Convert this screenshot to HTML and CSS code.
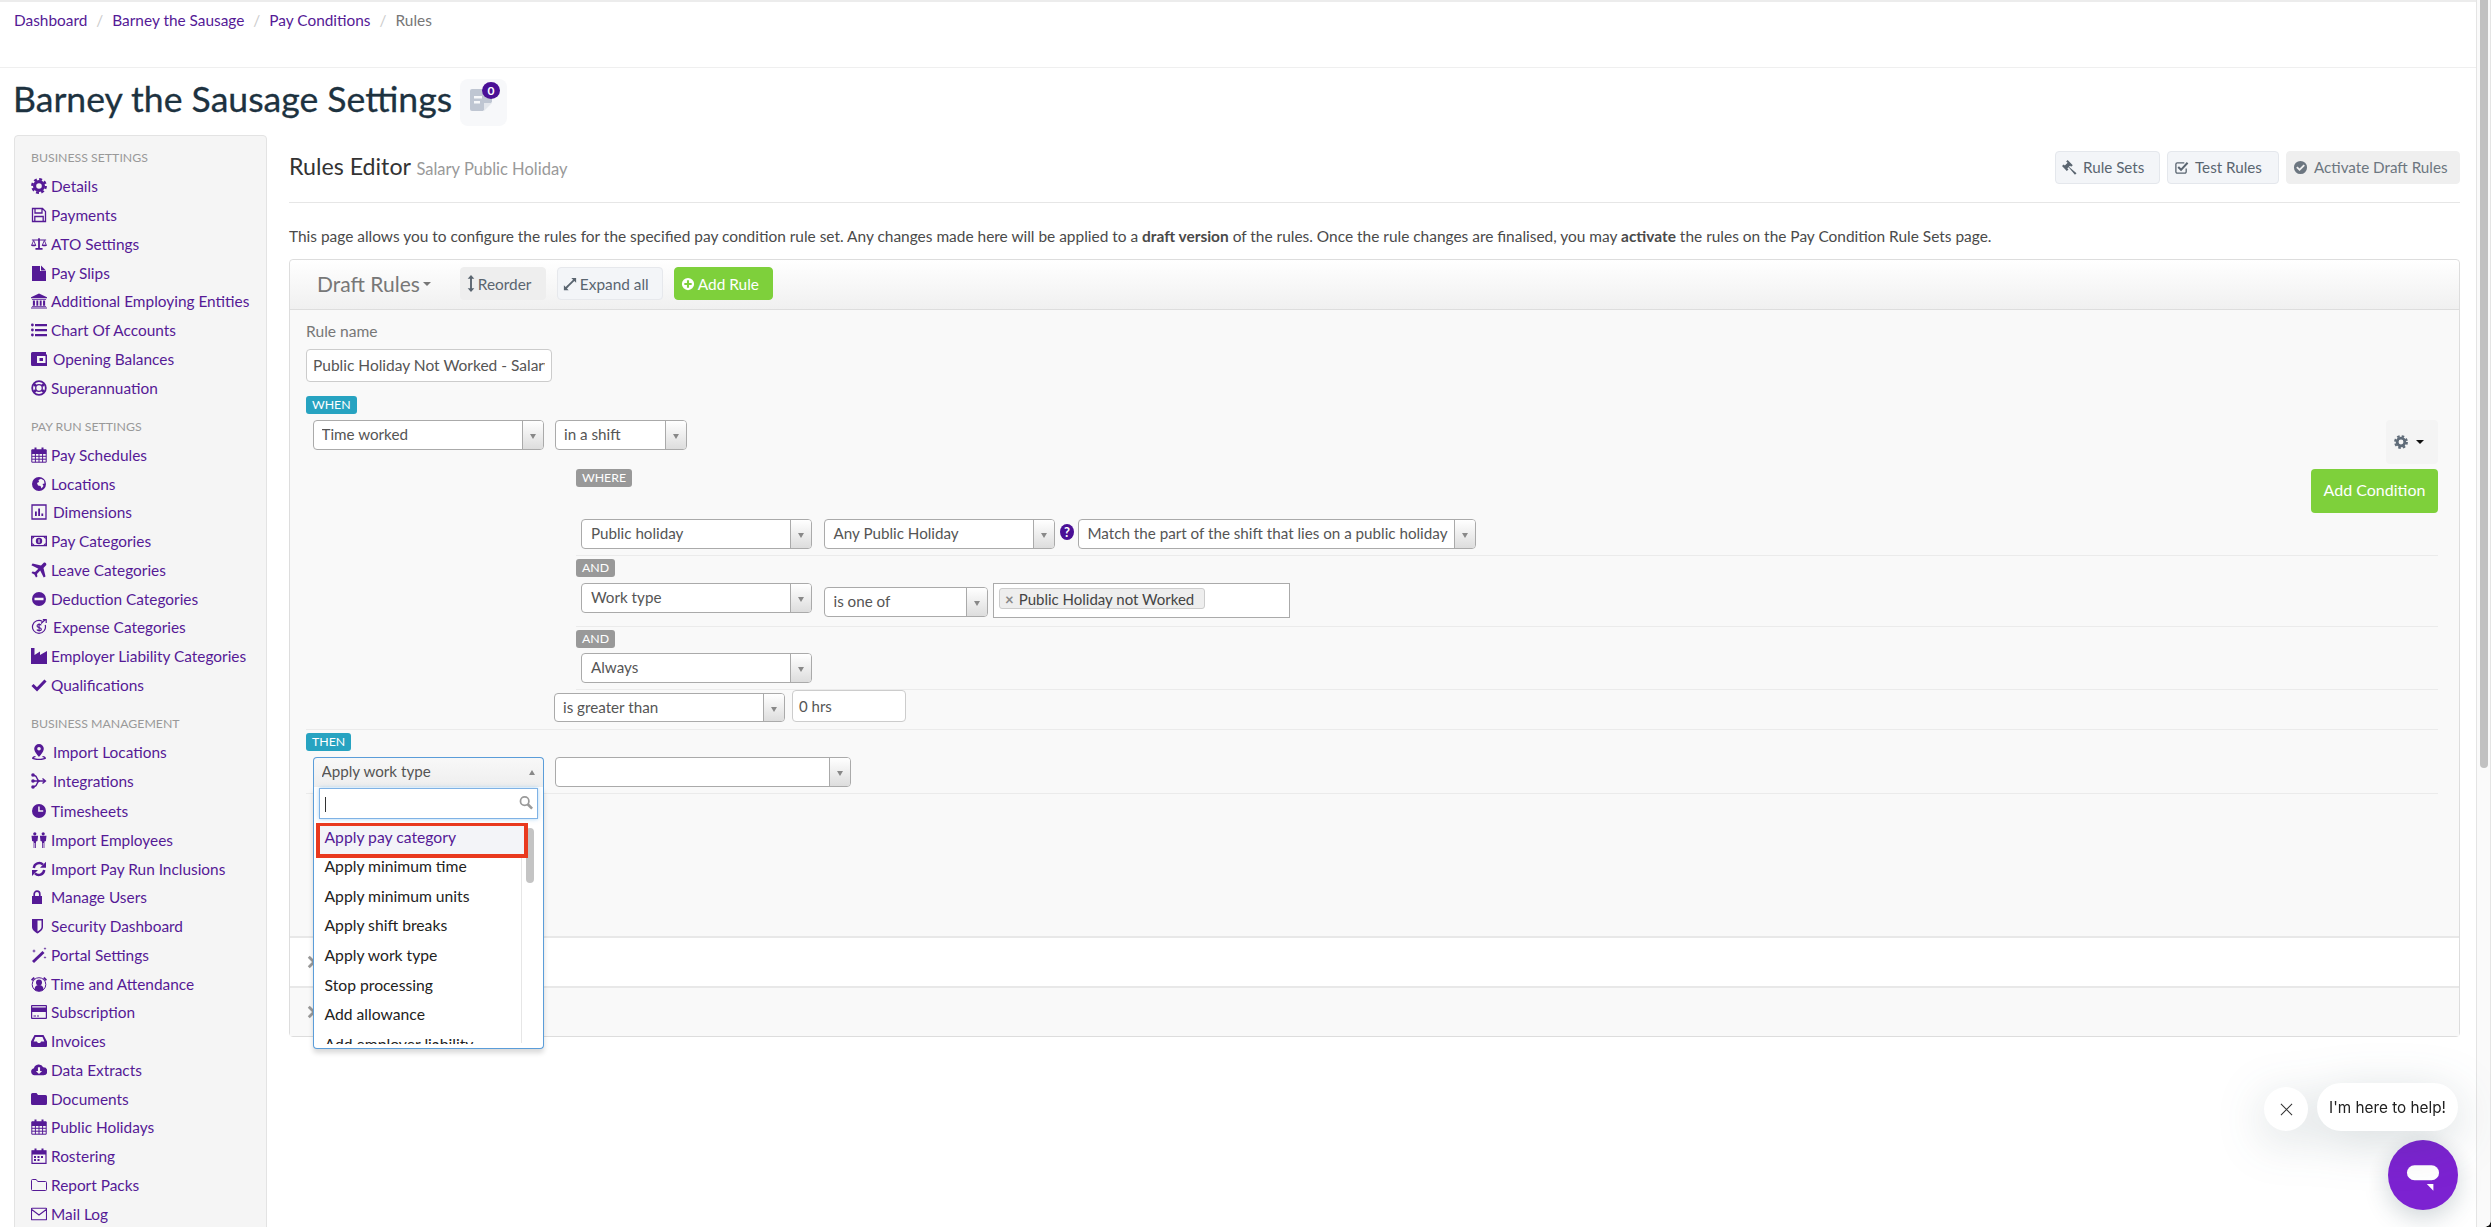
FILE: index.html
```html
<!DOCTYPE html>
<html lang="en">
<head>
<meta charset="utf-8">
<title>Rules Editor</title>
<link rel="stylesheet" href="styles.css">
</head>
<body>
<svg class="sprite" width="0" height="0" aria-hidden="true">
<defs>
<symbol id="i-gear" viewBox="0 0 16 16"><circle cx="8" cy="8" r="4.4" fill="none" stroke="currentColor" stroke-width="3.2"/><circle cx="8" cy="8" r="6.7" fill="none" stroke="currentColor" stroke-width="2.4" stroke-dasharray="2.9 2.36"/></symbol>
<symbol id="i-save" viewBox="0 0 16 16"><path d="M1.5 1.5h10l3 3v10h-13z M4 1.5v4.5h7v-4.5 M3.8 14.5v-5h8.4v5" fill="none" stroke="currentColor" stroke-width="1.3"/></symbol>
<symbol id="i-scale" viewBox="0 0 18 16"><path d="M8 1.5h2v11h3v2H5v-2h3z M1 3h16v1.2H1z"/><path d="M3 4L.8 9.2h4.4zM15 4l-2.2 5.2h4.4z" fill="none" stroke="currentColor"/><path d="M0 9h6c0 2-6 2-6 0zM12 9h6c0 2-6 2-6 0z"/></symbol>
<symbol id="i-file" viewBox="0 0 14 16"><path d="M0 1h8v5h6v10H0zM9 0.5l5 5H9z"/></symbol>
<symbol id="i-bank" viewBox="0 0 17 16"><path d="M8.5 0L17 4v1H0V4zM1 5.8h15v1H1zM2 7.5h2.2v5.5H2zM5.7 7.5h2v5.5h-2zM9.3 7.5h2v5.5h-2zM12.8 7.5H15v5.5h-2.2zM1 13.5h15v1H1zM0 15h17v1H0z"/></symbol>
<symbol id="i-list" viewBox="0 0 16 16"><circle cx="1.4" cy="3" r="1.4"/><circle cx="1.4" cy="8" r="1.4"/><circle cx="1.4" cy="13" r="1.4"/><path d="M4 2h12v2.2H4zM4 7h12v2.2H4zM4 12h12v2.2H4z"/></symbol>
<symbol id="i-wallet" viewBox="0 0 16 16"><path fill-rule="evenodd" d="M1.5 1H15v2.5h1V15H1.5A1.5 1.5 0 0 1 0 13.5v-11A1.5 1.5 0 0 1 1.500 1zM6 5v7h8.500V5zM8.500 7h3.500v3H8.500z"/></symbol>
<symbol id="i-buoy" viewBox="0 0 16 16"><circle cx="8" cy="8" r="6.800" fill="none" stroke="currentColor" stroke-width="1.800"/><circle cx="8" cy="8" r="3.300" fill="none" stroke="currentColor" stroke-width="1.300"/><path d="M2.800 3.800L5 6M13.200 3.800L11 6M2.800 12.200L5 10M13.200 12.200L11 10" stroke="currentColor" stroke-width="2.600"/></symbol>
<symbol id="i-cal" viewBox="0 0 16 16"><path fill="none" stroke="currentColor" d="M.8 2.800h14.400v12.400H.8zM.8 6.500h14.400M.8 9.300h14.400M.8 12.200h14.400M4.400 6.500v8.700M8 6.500v8.700M11.600 6.500v8.700"/><path d="M.8 2.800h14.400v3.700H.8z"/><path d="M3.500.5h2v3.500h-2zM10.500.5h2v3.500h-2z"/></symbol>
<symbol id="i-globe" viewBox="0 0 16 16"><path fill-rule="evenodd" d="M8 1a7 7 0 1 1 0 14A7 7 0 0 1 8 1zM10 2.800L7.500 4 8 6l-2 1 1 2.500 2.500.5 1 2.500 2-2.500-1-2 2-.5-.5-3z"/></symbol>
<symbol id="i-chart" viewBox="0 0 16 16"><path fill="none" stroke="currentColor" stroke-width="1.300" d="M1 1h14v14H1z"/><path d="M4 7.500h1.800V12H4zM7.200 4.500H9V12H7.200zM10.400 9.500h1.800V12h-1.800z"/></symbol>
<symbol id="i-money" viewBox="0 0 18 12"><path fill-rule="evenodd" d="M0 0h18v12H0zM1.500 1.500v9h15v-9z"/><circle cx="9" cy="6" r="3.600"/><path d="M1.500 4L4 1.500H1.500zM16.500 4L14 1.500h2.500zM1.500 8L4 10.500H1.500zM16.500 8L14 10.500h2.500z"/><path d="M8.400 4h1.200v4H8.400z" fill="#f5f5f5"/></symbol>
<symbol id="i-plane" viewBox="0 0 16 16"><path d="M13 .6c1.300-.5 2.700.8 2.300 2.300L12.500 6l2 8.400-1.800 1.200-3.500-7L6 12l.4 2.500L5 15.500 3.400 12.600.5 11l1-1.400L4 10l3.400-3.200-7-3.500L1.600 1.500 10 3.500z"/></symbol>
<symbol id="i-minus" viewBox="0 0 16 16"><path fill-rule="evenodd" d="M8 1a7 7 0 1 1 0 14A7 7 0 0 1 8 1zM3.500 6.800v2.400h9V6.800z"/></symbol>
<symbol id="i-expense" viewBox="0 0 16 16"><path d="M11.500 2.400A6.500 6.500 0 1 0 14.200 6" fill="none" stroke="currentColor" stroke-width="1.200"/><path d="M10 4.500L14.500.5M11.800.6h3.400V4" fill="none" stroke="currentColor" stroke-width="1.200"/><path d="M10.300 6.200C9.500 5 6 5 6 7c0 2 4.400 1.200 4.400 3.200 0 1.800-3.400 1.800-4.600.4M8.100 4.200v8.400" fill="none" stroke="currentColor" stroke-width="1.100"/></symbol>
<symbol id="i-factory" viewBox="0 0 16 16"><path d="M0 0h3.500v7L9 3.500V7l7-4v13H0z"/></symbol>
<symbol id="i-check" viewBox="0 0 16 16"><path d="M1.500 8l4.500 4.300L14.500 3.500" fill="none" stroke="currentColor" stroke-width="3"/></symbol>
<symbol id="i-pin" viewBox="0 0 16 16"><path fill-rule="evenodd" d="M8 0a4.800 4.800 0 0 1 4.800 4.800C12.800 8 8 13 8 13S3.200 8 3.200 4.800A4.800 4.800 0 0 1 8 0zm0 3a1.800 1.800 0 1 0 0 3.600A1.800 1.800 0 0 0 8 3z"/><path d="M1 14.200c0-1 1.500-1.800 3.200-2.200l.6.900C3.500 13.200 3 13.700 3 14c2 1 8 1 10 0 0-.3-.5-.8-1.800-1.100l.6-.9c1.700.4 3.200 1.200 3.200 2.200 0 2.400-14 2.400-14 0z"/></symbol>
<symbol id="i-integr" viewBox="0 0 16 16"><circle cx="2" cy="2" r="1.800"/><circle cx="2" cy="8" r="1.800"/><circle cx="2" cy="14" r="1.800"/><path d="M3 2.500C7 2.500 5 8 9 8M3 13.500C7 13.500 5 8 9 8M3 8h11M11.500 5.500L14.500 8l-3 2.500" fill="none" stroke="currentColor" stroke-width="1.300"/></symbol>
<symbol id="i-clock" viewBox="0 0 16 16"><path fill-rule="evenodd" d="M8 1a7 7 0 1 1 0 14A7 7 0 0 1 8 1zM7.200 3.500v5.300h5V7.300H8.700V3.500z"/></symbol>
<symbol id="i-people" viewBox="0 0 16 16"><circle cx="3.800" cy="1.800" r="1.600"/><circle cx="12.200" cy="1.800" r="1.600"/><path d="M.5 3.800h6.600L6.500 9 5 9.400V16H4.200v-5H3.400v5h-.8V9.400L1.100 9zM8.900 3.800h6.600L14.900 9l-1.500.4V16h-.8v-5h-.8v5H11V9.400L9.500 9z"/></symbol>
<symbol id="i-refresh" viewBox="0 0 16 16"><path d="M2.800 7A5.500 5.500 0 0 1 12 3.600" fill="none" stroke="currentColor" stroke-width="2.400"/><path d="M13.200 9A5.500 5.500 0 0 1 4 12.400" fill="none" stroke="currentColor" stroke-width="2.400"/><path d="M1 15V9h6z"/><path d="M15 .8v6h-6z"/></symbol>
<symbol id="i-lock" viewBox="0 0 16 16"><path d="M1 7h10v8H1z"/><path d="M3.200 7.500V5a2.800 2.800 0 0 1 5.600 0v2.500" fill="none" stroke="currentColor" stroke-width="1.700"/></symbol>
<symbol id="i-shield" viewBox="0 0 16 16"><path fill-rule="evenodd" d="M1 1h11v8c0 3-3 5-5.500 6.500C4 14 1 12 1 9zm5.500 1.500v11c2-1.200 4-2.600 4-4.500V2.500z"/></symbol>
<symbol id="i-wand" viewBox="0 0 16 16"><path d="M11.500 4l2 2L3 16l-2-2z"/><path d="M3 2l.5 1.500L5 4l-1.500.5L3 6l-.5-1.500L1 4l1.500-.5zM14 0l.4 1.200 1.200.4-1.200.4-.4 1.200-.4-1.200-1.200-.4 1.200-.4zM14 9l.4 1.200 1.200.4-1.200.4L14 12l-.4-1.200-1.200-.4 1.200-.4z"/></symbol>
<symbol id="i-alarm" viewBox="0 0 16 16"><circle cx="8" cy="8.500" r="6.800" fill="none" stroke="currentColor" stroke-width="1"/><circle cx="8" cy="6.500" r="3"/><path d="M3.500 14c0-3.500 1.500-5 4.500-5s4.500 1.500 4.500 5c-2 1.500-7 1.500-9 0z"/><path d="M0 3.500L2.500 1l1.500 1.200-2.800 2.800zM16 3.500L13.500 1 12 2.200l2.800 2.800z"/></symbol>
<symbol id="i-card" viewBox="0 0 16 14"><path fill-rule="evenodd" d="M1 0h14a1 1 0 0 1 1 1v12a1 1 0 0 1-1 1H1a1 1 0 0 1-1-1V1a1 1 0 0 1 1-1zm.2 7v5.800h13.600V7zM1.200 1.200v1.300h13.600V1.200z"/><path d="M2.500 10.500h2.500v1H2.500zM6 10.500h2v1H6z"/></symbol>
<symbol id="i-inbox" viewBox="0 0 16 14"><path fill-rule="evenodd" d="M3.500 1h9L16 7.500V12a1 1 0 0 1-1 1H1a1 1 0 0 1-1-1V7.500zM4.500 3L2.600 7.500h3.300l1 1.500h2.200l1-1.500h3.300L11.500 3z"/></symbol>
<symbol id="i-cloud" viewBox="0 0 18 14"><path fill-rule="evenodd" d="M4 13a4 4 0 0 1-.7-7.900A5.500 5.500 0 0 1 13.700 4 4.500 4.500 0 0 1 14 13zM7.800 4v4H5.500L9 11.500 12.500 8h-2.300V4z"/></symbol>
<symbol id="i-folder" viewBox="0 0 16 14"><path d="M1.500 1h4L7 3h7.500A1.500 1.500 0 0 1 16 4.500v7a1.500 1.500 0 0 1-1.500 1.500h-13A1.500 1.500 0 0 1 0 11.500v-9A1.500 1.500 0 0 1 1.500 1z"/></symbol>
<symbol id="i-folder-o" viewBox="0 0 16 14"><path fill="none" stroke="currentColor" d="M1.500 1.500h3.700L6.700 3.500h7.800a1 1 0 0 1 1 1v7a1 1 0 0 1-1 1h-13a1 1 0 0 1-1-1v-9a1 1 0 0 1 1-1z"/></symbol>
<symbol id="i-roster" viewBox="0 0 16 16"><path fill="none" stroke="currentColor" stroke-width="1.200" d="M1 2.800h14v12.600H1z"/><path d="M1 2.800h14v3.700H1zM3.500.5h2v3h-2zM10.500.5h2v3h-2zM3 8h2v2H3zM6.500 8h2v2h-2zM10 8h2v2h-2zM3 11h2v2H3zM6.500 11h2v2h-2z"/></symbol>
<symbol id="i-mail" viewBox="0 0 16 13"><path fill="none" stroke="currentColor" stroke-width="1.100" d="M1 .7h14a.5.500 0 0 1 .5.500v10.600a.5.500 0 0 1-.5.500H1a.5.500 0 0 1-.5-.5V1.200A.5.500 0 0 1 1 .7zM.7 2l7.300 5.500L15.300 2"/></symbol>
<symbol id="i-gavel" viewBox="0 0 16 16"><path d="M6 0l5.500 5.500-1.800 1.700L8.600 6 7.300 7.300l8.200 6.700-1.700 1.800L7 7.600 5.700 8.900l1.200 1.100-1.800 1.800L0 6.500 1.800 4.800 3 5.900l3-3L4.400 1.700z"/></symbol>
<symbol id="i-checksq" viewBox="0 0 16 16"><path d="M13 9v3.500a1.500 1.500 0 0 1-1.500 1.500h-8A1.500 1.500 0 0 1 2 12.500v-8A1.500 1.500 0 0 1 3.500 3H11" fill="none" stroke="currentColor" stroke-width="1.400"/><path d="M4.500 7.500l3 3L14.500 3" fill="none" stroke="currentColor" stroke-width="2.200"/></symbol>
<symbol id="i-checkcirc" viewBox="0 0 16 16"><path fill-rule="evenodd" d="M8 1a7 7 0 1 1 0 14A7 7 0 0 1 8 1zM4.800 6.800L3.400 8.300 7 11.800l5.700-5.700-1.400-1.400L7 9z"/></symbol>
<symbol id="i-updown" viewBox="0 0 8 18"><path d="M4 0l3.500 4H5v10h2.500L4 18 .5 14H3V4H.5z"/></symbol>
<symbol id="i-expand" viewBox="0 0 16 16"><path d="M9.500 1H15v5.500l-2-2L6 11.500 4.500 10l7-7zM6.500 15H1V9.500l2 2L5 9.500 6.500 11l-2 2z"/></symbol>
<symbol id="i-plus" viewBox="0 0 16 16"><path fill-rule="evenodd" d="M8 1a7 7 0 1 1 0 14A7 7 0 0 1 8 1zM6.800 3.800v3H3.800v2.400h3v3h2.400v-3h3V6.800h-3v-3z"/></symbol>
<symbol id="i-chev" viewBox="0 0 16 16"><path d="M2 2L8 8 2 14M14 2L8 8l6 6" fill="none" stroke="currentColor" stroke-width="3.200"/></symbol>
</defs>
</svg>
<div class="app">
  <div class="page">
    <nav class="crumbs">
      <a href="#">Dashboard</a><span class="sep">/</span><a href="#">Barney the Sausage</a><span class="sep">/</span><a href="#">Pay Conditions</a><span class="sep">/</span><span class="cur">Rules</span>
    </nav>
    <header class="titlebar">
      <h1>Barney the Sausage Settings</h1>
      <div class="notes">
        <svg class="note-ic" viewBox="0 0 22 22"><path d="M2 0h18a2 2 0 0 1 2 2v11l-9 9H2a2 2 0 0 1-2-2V2a2 2 0 0 1 2-2z" fill="#bfc6d2"/><path d="M4 7h8v2.500H4zM4 12h6v2.500H4z" fill="#f7f8fa"/><path d="M14 22v-8h8z" fill="#e4e7ec"/></svg>
        <span class="note-badge">0</span>
      </div>
    </header>
    <div class="columns">
      <aside class="sidebar">
        <h5>BUSINESS SETTINGS</h5>
        <a class="it" href="#"><svg class="ic"><use href="#i-gear"/></svg>Details</a>
        <a class="it" href="#"><svg class="ic"><use href="#i-save"/></svg>Payments</a>
        <a class="it" href="#"><svg class="ic"><use href="#i-scale"/></svg>ATO Settings</a>
        <a class="it" href="#"><svg class="ic"><use href="#i-file"/></svg>Pay Slips</a>
        <a class="it" href="#"><svg class="ic"><use href="#i-bank"/></svg>Additional Employing Entities</a>
        <a class="it" href="#"><svg class="ic"><use href="#i-list"/></svg>Chart Of Accounts</a>
        <a class="it wide" href="#"><svg class="ic"><use href="#i-wallet"/></svg>Opening Balances</a>
        <a class="it" href="#"><svg class="ic"><use href="#i-buoy"/></svg>Superannuation</a>
        <h5>PAY RUN SETTINGS</h5>
        <a class="it" href="#"><svg class="ic"><use href="#i-cal"/></svg>Pay Schedules</a>
        <a class="it" href="#"><svg class="ic"><use href="#i-globe"/></svg>Locations</a>
        <a class="it wide" href="#"><svg class="ic"><use href="#i-chart"/></svg>Dimensions</a>
        <a class="it" href="#"><svg class="ic"><use href="#i-money"/></svg>Pay Categories</a>
        <a class="it" href="#"><svg class="ic"><use href="#i-plane"/></svg>Leave Categories</a>
        <a class="it" href="#"><svg class="ic"><use href="#i-minus"/></svg>Deduction Categories</a>
        <a class="it wide" href="#"><svg class="ic"><use href="#i-expense"/></svg>Expense Categories</a>
        <a class="it" href="#"><svg class="ic"><use href="#i-factory"/></svg>Employer Liability Categories</a>
        <a class="it" href="#"><svg class="ic"><use href="#i-check"/></svg>Qualifications</a>
        <h5>BUSINESS MANAGEMENT</h5>
        <a class="it wide" href="#"><svg class="ic"><use href="#i-pin"/></svg>Import Locations</a>
        <a class="it wide" href="#"><svg class="ic"><use href="#i-integr"/></svg>Integrations</a>
        <a class="it nudge" href="#"><svg class="ic"><use href="#i-clock"/></svg>Timesheets</a>
        <a class="it" href="#"><svg class="ic"><use href="#i-people"/></svg>Import Employees</a>
        <a class="it" href="#"><svg class="ic"><use href="#i-refresh"/></svg>Import Pay Run Inclusions</a>
        <a class="it" href="#"><svg class="ic"><use href="#i-lock"/></svg>Manage Users</a>
        <a class="it" href="#"><svg class="ic"><use href="#i-shield"/></svg>Security Dashboard</a>
        <a class="it" href="#"><svg class="ic"><use href="#i-wand"/></svg>Portal Settings</a>
        <a class="it" href="#"><svg class="ic"><use href="#i-alarm"/></svg>Time and Attendance</a>
        <a class="it" href="#"><svg class="ic"><use href="#i-card"/></svg>Subscription</a>
        <a class="it" href="#"><svg class="ic"><use href="#i-inbox"/></svg>Invoices</a>
        <a class="it" href="#"><svg class="ic"><use href="#i-cloud"/></svg>Data Extracts</a>
        <a class="it" href="#"><svg class="ic"><use href="#i-folder"/></svg>Documents</a>
        <a class="it" href="#"><svg class="ic"><use href="#i-cal"/></svg>Public Holidays</a>
        <a class="it" href="#"><svg class="ic"><use href="#i-roster"/></svg>Rostering</a>
        <a class="it" href="#"><svg class="ic"><use href="#i-folder-o"/></svg>Report Packs</a>
        <a class="it" href="#"><svg class="ic"><use href="#i-mail"/></svg>Mail Log</a>
      </aside>
      <main class="main">
        <div class="editor-head">
          <h2>Rules Editor <small>Salary Public Holiday</small></h2>
          <div class="actions">
            <a class="btn b1" href="#"><svg class="btn-ic"><use href="#i-gavel"/></svg>Rule Sets</a>
            <a class="btn b2" href="#"><svg class="btn-ic"><use href="#i-checksq"/></svg>Test Rules</a>
            <a class="btn b3 flat" href="#"><svg class="btn-ic"><use href="#i-checkcirc"/></svg>Activate Draft Rules</a>
          </div>
        </div>
        <p class="intro">This page allows you to configure the rules for the specified pay condition rule set. Any changes made here will be applied to a <b>draft version</b> of the rules. Once the rule changes are finalised, you may <b>activate</b> the rules on the Pay Condition Rule Sets page.</p>
        <section class="panel">
          <div class="panel-head">
            <span class="draft">Draft Rules<i class="caret"></i></span>
            <a class="tool flat" href="#"><svg class="ud"><use href="#i-updown"/></svg>Reorder</a>
            <a class="tool expand" href="#"><svg class="tool-ic"><use href="#i-expand"/></svg>Expand all</a>
            <a class="tool green" href="#"><svg class="tool-ic"><use href="#i-plus"/></svg>Add Rule</a>
          </div>
          <div class="rule">
            <label class="rule-label">Rule name</label>
            <div class="text-input name"><span>Public Holiday Not Worked - Salary</span></div>
            <span class="tag teal when">WHEN</span>
            <div class="row first">
              <div class="sel w230"><span>Time worked</span><b></b></div>
              <div class="sel w132"><span>in a shift</span><b></b></div>
              <div class="side-tools">
                <a class="gear" href="#"><svg class="gear-ic"><use href="#i-gear"/></svg><i class="caret dark"></i></a>
                <a class="add-cond" href="#">Add Condition</a>
              </div>
            </div>
            <div class="cond-area">
              <span class="tag grey where">WHERE</span>
              <div class="cond c1">
                <div class="sel w230"><span>Public holiday</span><b></b></div>
                <div class="sel w230"><span>Any Public Holiday</span><b></b></div>
                <span class="help">?</span>
                <div class="sel w398"><span>Match the part of the shift that lies on a public holiday</span><b></b></div>
              </div>
              <span class="tag grey and">AND</span>
              <div class="cond c2">
                <div class="sel w230"><span>Work type</span><b></b></div>
                <div class="sel w164 low"><span>is one of</span><b></b></div>
                <div class="multi"><span class="pill"><i>×</i>Public Holiday not Worked</span></div>
              </div>
              <span class="tag grey and">AND</span>
              <div class="cond c3">
                <div class="sel w230"><span>Always</span><b></b></div>
              </div>
            </div>
            <div class="row compare">
              <div class="sel w230"><span>is greater than</span><b></b></div>
              <div class="text-input hrs">0 hrs</div>
            </div>
            <span class="tag teal then">THEN</span>
            <div class="row action">
              <div class="sel w230 open"><span>Apply work type</span><b></b>
                <div class="drop">
                  <div class="search"><i class="cursor"></i><svg class="mag" viewBox="0 0 16 16"><circle cx="6.500" cy="6.500" r="4.800" fill="none" stroke="#9a9a9a" stroke-width="2"/><path d="M10 10l5 5" stroke="#9a9a9a" stroke-width="3"/></svg></div>
                  <div class="list">
                    <ul>
                      <li class="hl">Apply pay category</li>
                      <li>Apply minimum time</li>
                      <li>Apply minimum units</li>
                      <li>Apply shift breaks</li>
                      <li>Apply work type</li>
                      <li>Stop processing</li>
                      <li>Add allowance</li>
                      <li>Add employer liability</li>
                    </ul>
                    <div class="thumb"></div>
                  </div>
                </div>
              </div>
              <div class="sel w296"><span></span><b></b></div>
            </div>
          </div>
          <div class="bar white"><svg class="chev"><use href="#i-chev"/></svg></div>
          <div class="bar"><svg class="chev"><use href="#i-chev"/></svg></div>
        </section>
      </main>
    </div>
  </div>
  <div class="scroll"><div class="scroll-thumb"></div></div>
</div>
<div class="chat">
  <div class="chat-msg">
    <span class="chat-x"><svg viewBox="0 0 14 14"><path d="M1 1l12 12M13 1L1 13" stroke="#333" stroke-width="1.100"/></svg></span>
    <span class="chat-bubble">I'm here to help!</span>
  </div>
  <div class="chat-btn"><svg viewBox="0 0 36 28"><rect x="1" y="1" width="34" height="16" rx="8" fill="#fff"/><path d="M22 21h7v7z" fill="#fff"/></svg></div>
</div>
<div class="corner"></div>
</body>
</html>
```
FILE: styles.css
```css
* { box-sizing: border-box; }
html, body { margin: 0; height: 100%; }
body { font-family: Lato, "Noto Sans", sans-serif; font-size: 15px; color: #555; background: #fff; overflow: hidden; }
a { color: #551a96; text-decoration: none; }
.sprite { position: absolute; }
svg { fill: currentColor; }
.app { display: flex; height: 1227px; overflow: hidden; }
.page { flex: 1; min-width: 0; }
.scroll { width: 15px; border-left: 1px solid #e4e4e4; border-right: 1px solid #e4e4e4; background: #fafafa; padding: 0 2px 0 3px; }
.scroll-thumb { width: 8px; height: 768px; background: #c1c1c1; border-radius: 0 0 4px 4px; }
.corner { position: fixed; right: 0; bottom: 0; width: 6px; height: 6px; background: radial-gradient(circle at 0 0, transparent 5.500px, #111 6px); }

.crumbs { height: 68px; border-top: 2px solid #ececec; border-bottom: 1px solid #efefef; padding: 9px 14px 0; font-size: 15.400px; line-height: 18px; }
.sep { color: #ccc; margin: 0 9px; }
.cur { color: #777; }

.titlebar { display: flex; align-items: center; height: 67px; padding: 0 13px; gap: 8px; }
h1 { margin: 0 0 5px; font-size: 35.600px; font-weight: 400; color: #1d3240; line-height: 1; -webkit-text-stroke: .3px #1d3240; }
.notes { position: relative; width: 47px; height: 47px; margin-top: 1px; background: #f7f8fa; border-radius: 8px; display: flex; align-items: center; justify-content: center; }
.note-ic { width: 22px; height: 22px; margin: 0 5px 5px 0; }
.note-badge { position: absolute; left: 22px; top: 3px; width: 18px; height: 17px; border-radius: 50%; background: #4a0f96; color: #fff; font-size: 12px; font-weight: 700; line-height: 17px; text-align: center; }

.columns { display: flex; align-items: flex-start; padding: 0 16px 0 14px; gap: 22px; }
.sidebar { width: 253px; flex: none; height: 1200px; background: #f5f5f5; border: 1px solid #e3e3e3; border-radius: 4px; padding: 13px 16px; }
.sidebar h5 { margin: 0; height: 18px; font-size: 12.300px; line-height: 18px; font-weight: 400; color: #999; }
.sidebar h5:not(:first-child) { margin-top: 15.500px; }
.it { display: flex; align-items: center; height: 28.750px; font-size: 15.400px; white-space: nowrap; }
.it.nudge { margin-top: 1.500px; }
.sidebar h5 + .it { margin-top: 5px; }
.ic { width: 16px; height: 16px; margin-right: 4px; flex: none; }
.wide .ic { margin-right: 6px; }

.main { flex: 1; min-width: 0; }
.editor-head { display: flex; align-items: center; justify-content: space-between; height: 68px; padding: 0 0 3px; border-bottom: 1px solid #e6e6e6; }
h2 { margin: 0; font-size: 23.200px; font-weight: 400; color: #333; line-height: 1; }
h2 small { font-size: 16.500px; color: #999; }
.actions { display: flex; gap: 7px; }
.btn { display: flex; align-items: center; height: 33px; padding: 0 0 0 6px; background: #f3f5f8; border: 1px solid #e4e7ec; border-radius: 4px; color: #5a6570; font-size: 15.200px; }
.btn.flat { background: #efefef; border-color: #efefef; color: #6c7680; }
.b1 { width: 105px; }
.b2 { width: 112px; }
.b3 { width: 174px; }
.btn-ic { width: 15px; height: 15px; margin-right: 6px; }
.intro { margin: 0; height: 56px; padding-top: 24px; font-size: 15.450px; line-height: 18px; color: #4a4a4a; white-space: nowrap; }

.panel { height: 778px; border: 1px solid #ddd; border-radius: 4px; background: #f9f9f9; display: flex; flex-direction: column; overflow: visible; }
.panel-head { display: flex; align-items: center; height: 50px; flex: none; padding: 0 0 2px 27px; background: linear-gradient(#fff, #f0f0f0); border-bottom: 1px solid #ddd; gap: 11px; border-radius: 4px 4px 0 0; }
.draft { font-size: 21px; color: #777; margin-right: 18px; display: flex; align-items: center; }
.caret { display: inline-block; width: 0; height: 0; border: 4px solid transparent; border-top-color: #777; border-bottom: 0; margin-left: 3px; }
.caret.dark { border-top-color: #111; margin-left: 8px; }
.tool { display: flex; align-items: center; height: 33px; padding: 0 5px; border-radius: 4px; background: #f3f5f8; border: 1px solid #e6e8ec; color: #5a6570; font-size: 15.400px; }
.tool.flat { background: #eee; border-color: #eee; width: 86px; padding-left: 6px; }
.tool.expand { width: 106px; }
.tool.green { background: #7ed03b; border-color: #7ed03b; color: #fff; width: 99px; padding-left: 6px; }
.ud { width: 8px; height: 17px; margin-right: 3px; }
.tool-ic { width: 14px; height: 14px; margin-right: 3px; }

.rule { flex: 1; padding: 12px 21px 0 16px; position: relative; min-height: 0; }
.rule-label { display: block; height: 18px; line-height: 18px; font-size: 15.600px; color: #777; margin-bottom: 9px; }
.text-input { height: 33px; line-height: 31px; background: #fff; border: 1px solid #ccc; border-radius: 4px; font-size: 15px; color: #555; padding: 0 6px; white-space: nowrap; }
.text-input span { display: block; overflow: hidden; }
.name { width: 246px; margin-bottom: 14px; font-size: 15.500px; }
.tag { display: table; height: 18px; line-height: 17px; font-size: 12.300px; color: #fff; padding: 0 6px; border-radius: 3px; }
.teal { background: #27a3c1; }
.grey { background: #999; }
.row { display: flex; gap: 11.500px; }
.first { margin: 6px 0 0; padding-left: 6.500px; height: 30px; align-items: flex-start; }

.sel { position: relative; height: 30px; flex: none; background: #fff; border: 1px solid #aaa; border-radius: 4px; padding: 0 26px 0 8px; font-size: 15.200px; line-height: 27px; color: #555; white-space: nowrap; }
.sel span { display: block; overflow: hidden; }
.sel > b { position: absolute; right: 0; top: 0; bottom: 0; width: 21px; border-left: 1px solid #aaa; background: linear-gradient(#fff, #ddd); border-radius: 0 3px 3px 0; }
.sel > b::after { content: ""; position: absolute; left: 7px; top: 13px; border: 3.500px solid transparent; border-top: 5px solid #888; border-bottom: 0; }
.w230 { width: 231px; }
.w132 { width: 132px; }
.w164 { width: 164px; }
.w296 { width: 296px; }
.w398 { width: 398px; }

.cond-area { margin-left: 270px; }
.where { margin-top: 19px; }
.cond { display: flex; align-items: flex-start; gap: 11.500px; padding-left: 5px; border-bottom: 1px solid #ebebeb; }
.cond .sel span { padding-left: 1px; }
.c1 { margin-top: 32px; height: 37px; }
.c2 { margin-top: 6px; height: 44px; }
.c3 { margin-top: 5px; height: 37px; }
.and { margin-top: 3px; }
.help { width: 14px; height: 16px; margin: 5px -8px 0 -6px; border-radius: 50%; background: #4a0f96; color: #fff; font-size: 13px; font-weight: 700; line-height: 16px; text-align: center; flex: none; }
.low { margin-top: 4px; }
.multi { width: 297px; height: 35px; margin: 0 0 0 -6px; background: #fff; border: 1px solid #aaa; padding: 4px 5px; }
.pill { display: inline-flex; align-items: center; width: 206px; height: 21px; background: #eee; border: 1px solid #ccc; border-radius: 3px; font-size: 15px; color: #444; padding-left: 5px; }
.pill i { font-style: normal; font-weight: 700; color: #888; margin-right: 5px; }

.side-tools { margin-left: auto; height: 30px; display: flex; flex-direction: column; align-items: flex-end; gap: 5px; }
.gear { display: flex; flex: none; align-items: center; width: 52px; height: 44px; background: #f4f4f4; border-radius: 4px; padding-left: 8px; color: #5f6b78; }
.gear-ic { width: 14px; height: 14px; }
.add-cond { display: block; flex: none; width: 127px; height: 44px; line-height: 42px; text-align: center; background: #7ed03b; border-radius: 4px; color: #fff; font-size: 16px; }

.compare { padding-left: 248px; gap: 7px; height: 40px; border-bottom: 1px solid #ebebeb; align-items: flex-start; }
.compare .sel { margin-top: 3px; height: 29px; }
.hrs { width: 114px; height: 32px; }
.then { margin-top: 3px; }
.action { margin-top: 6px; height: 37px; padding-left: 6.500px; border-bottom: 1px solid #ebebeb; align-items: flex-start; }

.open { border-color: #5b9dd9; background: linear-gradient(#f8f8f8, #eee); border-radius: 4px 4px 0 0; border-bottom: 0; z-index: 5; }
.open > b { background: none; border: 0; }
.open > b::after { border-top: 0; border-bottom: 5px solid #888; top: 12px; }
.drop { position: absolute; left: -1px; top: 29px; width: 231px; height: 262px; background: #fff; border: 1px solid #5b9dd9; border-top: 0; border-radius: 0 0 4px 4px; box-shadow: 0 4px 5px rgba(0,0,0,.15); padding: 1px 5px 0; line-height: normal; }
.search { position: relative; height: 31px; border: 1px solid #7fb2e5; box-shadow: 0 0 4px rgba(82,168,236,.5); background: #fff; }
.cursor { position: absolute; left: 5px; top: 8px; height: 15px; border-left: 1px solid #333; }
.mag { position: absolute; right: 4px; top: 6px; width: 14px; height: 15px; }
.list { position: absolute; left: 0; top: 36px; right: 0; height: 221px; overflow: hidden; }
.list ul { list-style: none; margin: 0; padding: 0 0 0 2px; width: 208px; height: 221px; border-right: 1px solid #e6e6e6; }
.list li { height: 29.700px; line-height: 29.700px; padding-left: 9px; color: #222; font-size: 15.700px; white-space: nowrap; }
.list li.hl { height: 36px; line-height: 23px; border: 4px solid #e9391f; padding-left: 5px; background: #f3f4f8; color: #551a96; width: 212px; margin-bottom: -6px; margin-top: -1px; position: relative; z-index: 1; }
.thumb { position: absolute; left: 212px; top: 5px; width: 8px; height: 55px; border-radius: 4px; background: #c4c4c4; }

.bar { height: 50px; flex: none; border-top: 2px solid #e8e8e8; display: flex; align-items: center; background: #f9f9f9; padding-left: 17px; }
.bar.white { background: #fff; }
.chev { width: 14px; height: 16px; color: #999; }

.chat { position: fixed; right: 33px; bottom: 17px; display: flex; flex-direction: column; align-items: flex-end; gap: 9px; }
.chat-msg { display: flex; gap: 9px; align-items: flex-end; filter: drop-shadow(0 10px 24px rgba(40,70,80,.2)); }
.chat-x { display: flex; align-items: center; justify-content: center; width: 44px; height: 44px; border-radius: 50%; background: #fff; }
.chat-x svg { width: 13px; height: 13px; }
.chat-bubble { height: 48px; width: 141px; border-radius: 24px; background: #fff; font-family: Inter, sans-serif; font-size: 15.300px; line-height: 50px; text-align: center; color: #222; }
.chat-btn { width: 70px; height: 70px; border-radius: 50%; background: #7c22d1; display: flex; align-items: center; justify-content: center; box-shadow: 0 8px 24px rgba(40,70,80,.22); }
.chat-btn svg { width: 34px; height: 27px; margin-top: 5px; }
```
